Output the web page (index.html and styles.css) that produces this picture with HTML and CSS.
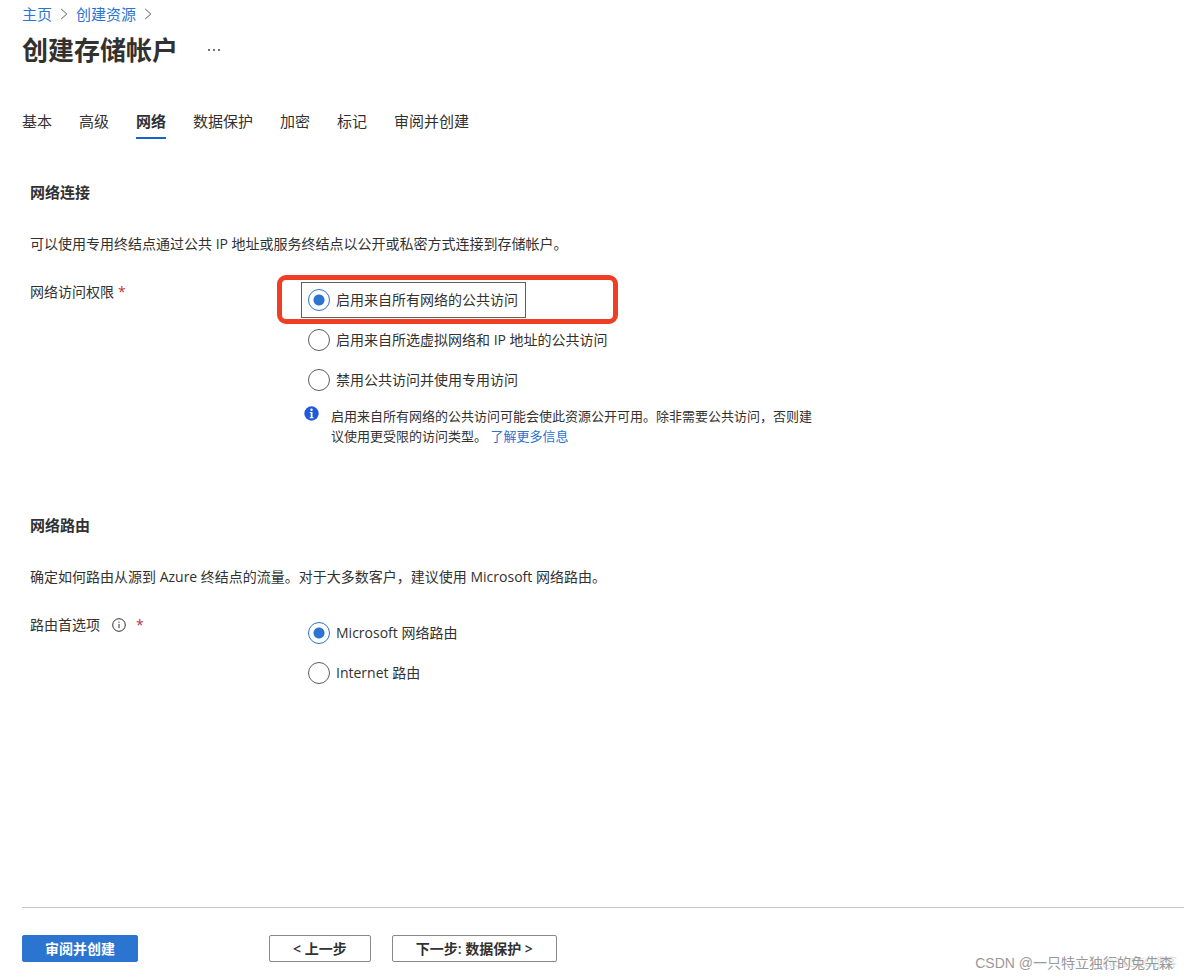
FILE: index.html
```html
<!DOCTYPE html>
<html lang="zh-CN">
<head>
<meta charset="utf-8">
<meta name="viewport" content="width=device-width, initial-scale=1">
<title>创建存储帐户</title>
<link rel="stylesheet" href="styles.css">
</head>
<body class="page">
<header class="header">
  <nav class="breadcrumb" aria-label="路径">
    <a class="link" href="#">主页</a>
    <svg class="chevron" viewBox="0 0 8 12" aria-hidden="true"><path d="M1.200 1 6.800 6 1.200 11"/></svg>
    <a class="link" href="#">创建资源</a>
    <svg class="chevron" viewBox="0 0 8 12" aria-hidden="true"><path d="M1.200 1 6.800 6 1.200 11"/></svg>
  </nav>
  <div class="title-row">
    <h1 class="title">创建存储帐户</h1>
    <button class="more" type="button" aria-label="更多"><svg class="more-icon" viewBox="0 0 14 4" aria-hidden="true"><circle cx="2" cy="2" r="0.9"/><circle cx="7" cy="2" r="0.9"/><circle cx="12" cy="2" r="0.9"/></svg></button>
  </div>
</header>
<div class="tabs" role="tablist">
  <button class="tab" role="tab" type="button">基本</button>
  <button class="tab" role="tab" type="button">高级</button>
  <button class="tab tab-active" role="tab" type="button" aria-selected="true">网络</button>
  <button class="tab" role="tab" type="button">数据保护</button>
  <button class="tab" role="tab" type="button">加密</button>
  <button class="tab" role="tab" type="button">标记</button>
  <button class="tab" role="tab" type="button">审阅并创建</button>
</div>
<main class="content">
  <section class="section">
    <h2 class="section-title">网络连接</h2>
    <p class="intro">可以使用专用终结点通过公共 IP 地址或服务终结点以公开或私密方式连接到存储帐户。</p>
    <div class="field">
      <div class="field-label"><span id="access-label">网络访问权限</span><span class="required">*</span></div>
      <div class="options" role="radiogroup" aria-labelledby="access-label">
        <div class="highlight" aria-hidden="true"></div>
        <label class="option option-focused" for="access-all"><input class="radio" type="radio" id="access-all" name="access" checked>启用来自所有网络的公共访问</label>
        <label class="option" for="access-selected"><input class="radio" type="radio" id="access-selected" name="access">启用来自所选虚拟网络和 IP 地址的公共访问</label>
        <label class="option" for="access-none"><input class="radio" type="radio" id="access-none" name="access">禁用公共访问并使用专用访问</label>
        <div class="note">
          <svg class="note-icon" viewBox="0 0 15 15" aria-hidden="true"><circle cx="7.5" cy="7.5" r="7.2" fill="#1f5bd8"/><circle cx="7.5" cy="3.7" r="1.2" fill="#fff"/><path d="M5.700 6h2.800v5.200h1v1H5.700v-1h1V7h-1z" fill="#fff"/></svg>
          <p class="note-text">启用来自所有网络的公共访问可能会使此资源公开可用。除非需要公共访问，否则建议使用更受限的访问类型。 <a class="link" href="#">了解更多信息</a></p>
        </div>
      </div>
    </div>
  </section>
  <section class="section">
    <h2 class="section-title">网络路由</h2>
    <p class="intro">确定如何路由从源到 Azure 终结点的流量。对于大多数客户，建议使用 Microsoft 网络路由。</p>
    <div class="field">
      <div class="field-label"><span id="route-label">路由首选项</span><svg class="help-icon" viewBox="0 0 14 14" aria-hidden="true"><circle cx="7" cy="7" r="6.300"/><path d="M7 6v4.200"/><path d="M7 3.700v1.200"/></svg><span class="required">*</span></div>
      <div class="options" role="radiogroup" aria-labelledby="route-label">
        <label class="option" for="route-ms"><input class="radio" type="radio" id="route-ms" name="route" checked>Microsoft 网络路由</label>
        <label class="option" for="route-net"><input class="radio" type="radio" id="route-net" name="route">Internet 路由</label>
      </div>
    </div>
  </section>
</main>
<footer class="footer">
  <button class="button button-primary" type="button">审阅并创建</button>
  <div class="steps">
    <button class="button" type="button">&lt; 上一步</button>
    <button class="button" type="button">下一步: 数据保护 &gt;</button>
  </div>
</footer>
<div class="watermark watermark-faint">@51CTO博客</div>
<div class="watermark">CSDN @一只特立独行的兔先森</div>
</body>
</html>
```
FILE: styles.css
```css
* {
  box-sizing: border-box;
}

.page {
  position: relative;
  display: flex;
  flex-direction: column;
  min-height: 100vh;
  margin: 0;
  background: #fff;
  color: #323130;
  font-family: "Open Sans", "Noto Sans CJK SC", sans-serif;
  font-size: 14px;
  line-height: 20px;
}

.link {
  color: #2b74d0;
  text-decoration: none;
}

.header {
  padding: 4px 22px 0;
}

.breadcrumb {
  display: flex;
  align-items: center;
  gap: 8px;
  font-size: 15px;
}

.chevron {
  width: 8px;
  height: 12px;
  fill: none;
  stroke: #605e5c;
}

.title-row {
  display: flex;
  align-items: center;
  gap: 29px;
  margin-top: 6px;
}

.title {
  margin: 0;
  font-size: 26px;
  font-weight: 700;
  line-height: 40px;
}

.more {
  display: flex;
  padding: 0;
  border: 0;
  background: none;
}

.more-icon {
  width: 14px;
  height: 4px;
  fill: #323130;
}

.tabs {
  display: flex;
  gap: 27px;
  margin-top: 40px;
  padding: 0 22px;
}

.tab {
  padding: 0 0 5px;
  border: 0;
  border-bottom: 2px solid transparent;
  background: none;
  color: inherit;
  font: inherit;
  font-size: 15px;
  line-height: 22px;
}

.tab-active {
  border-color: #1565c8;
  font-weight: 600;
}

.content {
  flex: 1;
  display: flex;
  flex-direction: column;
  gap: 69px;
  padding: 43px 30px 40px;
}

.section-title {
  margin: 0 0 32px;
  font-size: 15px;
  font-weight: 600;
  line-height: 20px;
}

.intro {
  margin: 0 0 28px;
}

.field {
  display: grid;
  grid-template-columns: 271px 1fr;
}

.field-label {
  display: flex;
  align-items: center;
  align-self: start;
}

.required {
  margin-left: 4px;
  color: #b8383c;
}

.help-icon {
  width: 14px;
  height: 14px;
  margin: 0 6px 0 12px;
  fill: none;
  stroke: #323130;
}

.options {
  position: relative;
  display: flex;
  flex-direction: column;
  align-items: flex-start;
  gap: 4px;
}

.highlight {
  position: absolute;
  top: -7px;
  left: -24px;
  width: 341px;
  height: 49px;
  border: 5px solid #ef3e24;
  border-radius: 9px;
  pointer-events: none;
}

.option {
  display: flex;
  align-items: center;
  gap: 6px;
  height: 36px;
  padding: 0 7px 0 6px;
  border: 1px solid transparent;
}

.option-focused {
  border-color: #605e5c;
}

.radio {
  appearance: none;
  width: 22px;
  height: 22px;
  margin: 0;
  border: 1px solid #605e5c;
  border-radius: 50%;
}

.radio:checked {
  border-color: #2b74d0;
  background: radial-gradient(circle, #2b74d0 5px, transparent 6px);
}

.note {
  display: flex;
  gap: 12px;
  max-width: 516px;
  margin-top: 4px;
  padding-left: 3px;
  font-size: 13px;
}

.note-icon {
  flex: none;
  width: 15px;
  height: 15px;
}

.note-text {
  margin: 0;
}

.footer {
  display: flex;
  gap: 131px;
  margin-left: 22px;
  padding: 27px 0 15px;
  border-top: 1px solid #c8c6c4;
}

.steps {
  display: flex;
  gap: 21px;
}

.button {
  height: 27px;
  padding: 0 23px;
  border: 1px solid #8a8886;
  border-radius: 2px;
  background: #fff;
  color: #323130;
  font: inherit;
  font-weight: 600;
  line-height: 20px;
}

.button-primary {
  padding: 0 22px;
  border-color: #2b74d0;
  background: #2b74d0;
  color: #fff;
}

.watermark {
  position: absolute;
  right: 11px;
  bottom: 4px;
  color: #999;
  font-family: "Liberation Sans", "Noto Sans CJK SC", sans-serif;
  font-size: 14px;
}

.watermark-faint {
  right: 7px;
  color: #ddd;
  font-size: 12px;
}
```
